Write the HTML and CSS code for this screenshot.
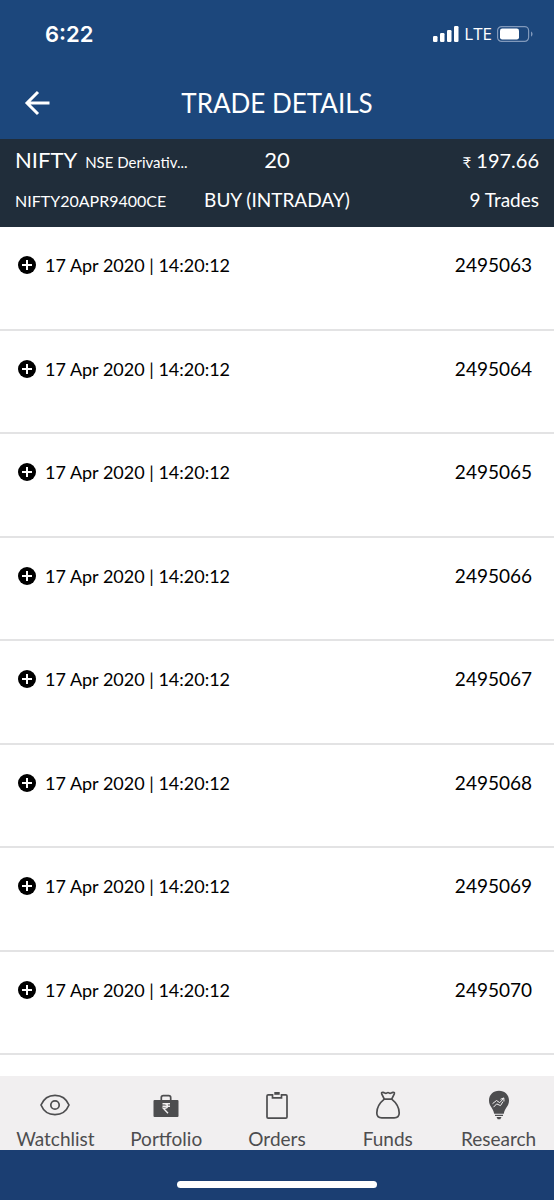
FILE: index.html
```html
<!DOCTYPE html>
<html lang="en">
<head>
<meta charset="utf-8">
<meta name="viewport" content="width=device-width, initial-scale=1">
<title>Trade Details</title>
<link rel="stylesheet" href="styles.css">
</head>
<body>
<header class="top">
  <div class="status-bar">
    <span class="clock">6:22</span>
    <div class="status-right">
      <svg width="26" height="16" viewBox="0 0 26 16" fill="#fff" aria-hidden="true">
        <rect x="0" y="10" width="4.500" height="6" rx="1.200"/>
        <rect x="7" y="7" width="4.500" height="9" rx="1.200"/>
        <rect x="14" y="4" width="4.500" height="12" rx="1.200"/>
        <rect x="21" y="0" width="4.500" height="16" rx="1.200"/>
      </svg>
      <span class="network">LTE</span>
      <svg width="36" height="16" viewBox="0 0 36 16" aria-hidden="true">
        <rect x=".6" y=".6" width="31" height="14.800" rx="4" fill="none" stroke="#8199bb" stroke-width="1.200"/>
        <rect x="3" y="2.600" width="19" height="10.800" rx="2.200" fill="#fff"/>
        <path d="M34 5.400c2 1 2 4.200 0 5.200z" fill="#8199bb"/>
      </svg>
    </div>
  </div>
  <div class="title-bar">
    <button class="back" type="button" aria-label="Back">
      <svg width="26" height="26" viewBox="0 0 26 26" fill="none" stroke="#fff" stroke-width="3">
        <path d="M25.500 13H3M14 2 3 13l11 11"/>
      </svg>
    </button>
    <h1>TRADE DETAILS</h1>
  </div>
</header>

<section class="summary">
  <div class="summary-row">
    <div class="scrip"><span class="symbol">NIFTY</span><span class="exchange">NSE Derivativ...</span></div>
    <div class="qty">20</div>
    <div class="price"><span class="rupee">₹</span> 197.66</div>
  </div>
  <div class="summary-row">
    <div class="contract">NIFTY20APR9400CE</div>
    <div>BUY (INTRADAY)</div>
    <div class="count">9 Trades</div>
  </div>
</section>

<main class="trades"></main>

<nav class="tabs">
  <a href="#watchlist">
    <svg width="30" height="30" viewBox="0 0 30 30" fill="none" stroke="#4d4d4f" stroke-width="1.700">
      <path d="M1 15C3.500 9 8.500 5.300 15 5.300S26.500 9 29 15c-2.500 6-7.500 9.700-14 9.700S3.500 21 1 15z"/>
      <circle cx="15" cy="15" r="4.200"/>
    </svg>
    Watchlist
  </a>
  <a href="#portfolio">
    <svg width="30" height="30" viewBox="0 0 30 30" fill="none" stroke="#4d4d4f">
      <path d="M10.300 10.500V7.700q0-2 2-2h5.400q2 0 2 2v2.800" stroke-width="1.700"/>
      <rect x="2.500" y="10" width="25" height="17" rx="1" fill="#4d4d4f" stroke="none"/>
      <path d="M11.500 13.700h7.500M11.500 16.200h7.500M12 13.700h1.500c4 0 4 4.600 0 4.600h-1.200l4.700 5" stroke="#f1eff0" stroke-width="1.400"/>
    </svg>
    Portfolio
  </a>
  <a href="#orders">
    <svg width="30" height="30" viewBox="0 0 30 30" fill="none" stroke="#4d4d4f" stroke-width="1.700">
      <path d="M10.500 4.800H6.200q-1.200 0-1.200 1.200v21q0 1.200 1.200 1.200h17.600q1.200 0 1.200-1.200V6q0-1.200-1.200-1.200h-4.300v3h-9z"/>
      <rect x="12.300" y="2" width="5.400" height="2.800" fill="#4d4d4f" stroke="none"/>
    </svg>
    Orders
  </a>
  <a href="#funds">
    <svg width="30" height="30" viewBox="0 0 30 30" fill="none" stroke="#4d4d4f" stroke-width="1.700" stroke-linejoin="round">
      <path d="M11.300 9.200 8.700 3.800q-.5-1.600 1.200-1.500 1 .1 2 .8 1.100.6 2.100-.2 1-.7 2 0 1 .8 2.100.2 1-.7 2-.8 1.700-.1 1.200 1.500l-2.600 5.400"/>
      <path d="M11.300 9.200h7.400c4.500 3.600 7.500 9 7.500 13.800 0 3.300-1.700 4.800-5 4.800H8.800c-3.300 0-5-1.500-5-4.800 0-4.800 3-10.200 7.500-13.800z"/>
    </svg>
    Funds
  </a>
  <a href="#research">
    <svg width="30" height="30" viewBox="0 0 30 30" fill="#4d4d4f">
      <path d="M15 .8C9.200.8 5 5 5 10.500c0 5.700 4.200 7.500 5.200 13.200h9.600c1-5.700 5.200-7.500 5.200-13.200C25 5 20.800.8 15 .8z"/>
      <path d="M11 24.700h8v1.300h-8zM12.500 27h5l-1.200 2.200h-2.600z"/>
      <path d="m8.500 13.700 4-3.200 3.200 2.200 4-4.400M9.500 17.200l3.200-3.300 3.800 1.700 2.500-4M16.500 9.300l3.300-1.400.2 3.500" fill="none" stroke="#f1eff0" stroke-width="1"/>
    </svg>
    Research
  </a>
</nav>
<footer class="home-area"><div class="home-bar"></div></footer>

<script>
const trades = [2495063, 2495064, 2495065, 2495066, 2495067, 2495068, 2495069, 2495070];
const list = document.querySelector('.trades');

trades.forEach(id => {
  const row = document.createElement('div');
  row.className = 'trade';
  row.innerHTML = `
    <button class="expand" type="button" aria-label="Expand trade ${id}">
      <svg width="18" height="18" viewBox="0 0 18 18">
        <circle cx="9" cy="9" r="9"/>
        <path d="M9 4v10M4 9h10" stroke="#fff" stroke-width="2"/>
      </svg>
    </button>
    <span class="time">17 Apr 2020 | 14:20:12</span>
    <span class="trade-id">${id}</span>`;
  list.appendChild(row);
});
</script>
</body>
</html>
```
FILE: styles.css
```css
* {
  box-sizing: border-box;
}

body {
  margin: 0;
  min-height: 100vh;
  display: flex;
  flex-direction: column;
  font-family: Lato, sans-serif;
  font-size: 19px;
  line-height: 24px;
  color: #000;
  background: #fff;
}

button {
  padding: 0;
  border: none;
  background: none;
  cursor: pointer;
}

svg {
  display: block;
}

.top {
  background: #1c477c;
  color: #fff;
}

.status-bar {
  display: flex;
  justify-content: space-between;
  align-items: center;
  height: 68px;
  padding: 0 21px 0 45px;
}

.clock {
  font-family: Inter, sans-serif;
  font-size: 22px;
  font-weight: 600;
}

.status-right {
  display: flex;
  align-items: center;
  gap: 5px;
}

.network {
  font-family: "Open Sans", sans-serif;
  font-size: 17px;
  font-weight: 500;
}

.title-bar {
  display: grid;
  grid-template-columns: 26px 1fr 26px;
  align-items: center;
  height: 71px;
  padding: 0 24px 2px;
}

.title-bar h1 {
  margin: 0;
  font-size: 26px;
  font-weight: 400;
  line-height: 32px;
  text-align: center;
}

.summary {
  display: flex;
  flex-direction: column;
  gap: 14px;
  height: 88px;
  padding: 9px 15px;
  background: #202d3a;
  color: #fff;
}

.summary-row {
  display: grid;
  grid-template-columns: 1fr auto 1fr;
  align-items: baseline;
}

.symbol,
.qty {
  font-size: 22px;
}

.exchange {
  margin-left: 8px;
  font-size: 15px;
}

.price {
  font-size: 20px;
  text-align: right;
}

.rupee {
  font-size: 15px;
}

.contract {
  font-size: 16px;
}

.count {
  text-align: right;
}

.trades {
  flex: 1;
  display: flex;
  flex-direction: column;
  padding-bottom: 21px;
}

.trade {
  flex: 1;
  display: flex;
  align-items: flex-start;
  gap: 9px;
  min-height: 80px;
  padding: 26px 22px 26px 18px;
  border-bottom: 2px solid #e3e3e4;
}

.expand {
  padding: 3px 0;
}

.time {
  flex: 1;
  font-size: 18px;
}

.tabs {
  display: grid;
  grid-template-columns: repeat(5, 1fr);
  height: 74px;
  background: #f1eff0;
}

.tabs a {
  display: flex;
  flex-direction: column;
  align-items: center;
  gap: 7px;
  padding-top: 14px;
  color: #4d4d4f;
  text-decoration: none;
}

.home-area {
  display: flex;
  justify-content: center;
  height: 50px;
  padding-top: 31px;
  background: #1b3e72;
}

.home-bar {
  width: 36%;
  height: 7px;
  border-radius: 4px;
  background: #fff;
}
```
